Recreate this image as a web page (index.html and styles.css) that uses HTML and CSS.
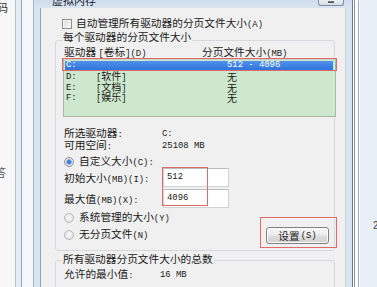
FILE: index.html
```html
<!DOCTYPE html>
<html lang="zh-CN">
<head>
<meta charset="utf-8">
<title>虚拟内存</title>
<link rel="stylesheet" href="styles.css">
</head>
<body>
<div class="screen">
  <div class="bg-left">
    <div class="bl-page">
      <span class="bl-ch bl-ch1">码</span>
      <span class="bl-ch bl-ch2">答</span>
    </div>
    <div class="bl-strip"></div>
    <div class="bl-pane"></div>
  </div>

  <div class="dialog">
    <div class="titlebar">
      <span class="title">虚拟内存</span>
      <span class="closebtn"><span class="closemark"></span></span>
    </div>
    <div class="client">
      <div class="auto">
        <span class="checkbox"></span>
        <span>自动管理所有驱动器的分页文件大小<span class="m">(A)</span></span>
      </div>

      <fieldset class="group">
        <legend>每个驱动器的分页文件大小</legend>
        <div class="listhead">
          <span class="lh-drive">驱动器 <span class="m">[</span>卷标<span class="m">](D)</span></span>
          <span class="lh-size">分页文件大小<span class="m">(MB)</span></span>
        </div>
        <div class="list">
          <div class="row sel"><span class="c-drv m">C:</span><span class="c-lbl"></span><span class="c-size m">512 - 4096</span></div>
          <div class="row"><span class="c-drv m">D:</span><span class="c-lbl"><span class="m">[</span>软件<span class="m">]</span></span><span class="c-size">无</span></div>
          <div class="row"><span class="c-drv m">E:</span><span class="c-lbl"><span class="m">[</span>文档<span class="m">]</span></span><span class="c-size">无</span></div>
          <div class="row"><span class="c-drv m">F:</span><span class="c-lbl"><span class="m">[</span>娱乐<span class="m">]</span></span><span class="c-size">无</span></div>
          <span class="mark mark-row"></span>
        </div>

        <div class="info">
          <div class="kv"><span class="k">所选驱动器<span class="m">:</span></span><span class="v m">C:</span></div>
          <div class="kv"><span class="k">可用空间<span class="m">:</span></span><span class="v m">25108 MB</span></div>
        </div>

        <div class="radio-row first"><span class="radio on"></span><span>自定义大小<span class="m">(C):</span></span></div>

        <div class="fields">
          <div class="field"><span class="fk">初始大小<span class="m">(MB)(I):</span></span><span class="input m">512</span></div>
          <div class="field"><span class="fk">最大值<span class="m">(MB)(X):</span></span><span class="input m">4096</span></div>
          <span class="mark mark-inputs"></span>
        </div>

        <div class="bottom">
          <div class="radios">
            <div class="radio-row"><span class="radio"></span><span>系统管理的大小<span class="m">(Y)</span></span></div>
            <div class="radio-row"><span class="radio"></span><span>无分页文件<span class="m">(N)</span></span></div>
          </div>
          <div class="btnwrap">
            <span class="btn">设置<span class="m">(S)</span></span>
            <span class="mark mark-btn"></span>
          </div>
        </div>
      </fieldset>

      <fieldset class="group group2">
        <legend>所有驱动器分页文件大小的总数</legend>
        <div class="kv total"><span class="k2">允许的最小值<span class="m">:</span></span><span class="v m">16 MB</span></div>
      </fieldset>
    </div>
  </div>

  <div class="bg-right">
    <div class="br-a"></div>
    <div class="br-b"></div>
    <div class="br-c"><span class="br-ch">2</span></div>
  </div>
</div>
</body>
</html>
```

FILE: styles.css
```css
* { box-sizing: border-box; }
html, body { margin: 0; padding: 0; }
body {
  width: 377px;
  height: 287px;
  overflow: hidden;
  background: #f0f0f0;
  font-family: "Noto Sans CJK SC", "Noto Sans", sans-serif;
  font-size: 10.7px;
  line-height: 12px;
  color: #1a1a1a;
}
.m { font-family: "Liberation Mono", monospace; font-size: 8.9px; }

.screen { display: flex; width: 377px; height: 287px; }

/* background window on the left */
.bg-left { display: flex; flex: none; width: 33px; height: 287px; }
.bl-page {
  width: 16px;
  background: #f7f7f7;
  border-right: 1px solid #b5c4d4;
  display: flex;
  flex-direction: column;
  overflow: hidden;
}
.bl-ch { font-size: 11px; line-height: 12px; color: #333; display: block; }
.bl-ch1 { margin: 1px 0 0 -3px; }
.bl-ch2 { margin: 153px 0 0 -5px; color: #555; }
.bl-strip {
  width: 6px;
  background: #e5ecf4;
  border-right: 1px solid #9ca5b0;
}
.bl-pane { width: 11px; background: #f3f6fa; }

/* dialog */
.dialog {
  flex: none;
  width: 320px;
  height: 287px;
  display: flex;
  flex-direction: column;
  background: #d9e4f1;
  border-left: 1px solid #a3b6cb;
  border-right: 1px solid #6f7c8a;
}
.titlebar {
  height: 8px;
  flex: none;
  display: flex;
  align-items: flex-start;
  overflow: hidden;
  padding-left: 18px;
  background: linear-gradient(#cfdcec, #dbe5f1);
}
.title { font-size: 11px; line-height: 12px; margin-top: -6px; color: #1a2633; }
.closebtn {
  margin-left: auto;
  margin-right: 8px;
  width: 26px;
  height: 6px;
  border: 1px solid #7f8ea2;
  border-top: none;
  border-radius: 0 0 3px 3px;
  background: linear-gradient(#e9eef4, #d4dde8);
  display: flex;
  justify-content: center;
}
.closemark { width: 6px; height: 2px; border-bottom: 1px solid #555; border-top: 1px solid #777; margin-top: 1px; }

.client {
  flex: 1;
  margin: 0 6px 0 6px;
  background: #f0f0f0;
  border-left: 1px solid #94a3b4;
  border-right: 1px solid #c6d3e1;
  display: flex;
  flex-direction: column;
}

.auto {
  display: flex;
  align-items: center;
  height: 12px;
  margin: 10px 0 0 21px;
  gap: 4px;
}
.checkbox {
  width: 10px;
  height: 10px;
  border: 1px solid #8e8f8f;
  background: linear-gradient(135deg, #dcdcdc, #f8f8f8);
  box-shadow: inset 0 0 0 1px #f4f4f4;
}

.group {
  margin: 1px 10px 0 14px;
  padding: 0 1px 6px 8px;
  border: 1px solid #d6dadf;
  border-radius: 3px;
  min-width: 0;
}
.group legend {
  padding: 0 1px 6px;
  margin-left: -2px;
  line-height: 12px;
}
.listhead { display: flex; height: 12px; margin-top: -3px; }
.lh-drive { width: 138px; }

.list {
  position: relative;
  height: 58px;
  margin: 1px -3px 0 -1px;
  background: #cde8cc;
  border: 1px solid #a9b6a9;
  border-top-color: #c3cfc3;
}
.row {
  display: flex;
  align-items: center;
  height: 10.5px;
  line-height: 10.5px;
  padding-left: 2px;
}
.row.sel {
  height: 9px;
  line-height: 9px;
  margin: 1px 2px 2px 1px;
  padding-left: 1px;
  background: linear-gradient(#4f91ea, #2f74dc);
  color: #fff;
}
.c-drv { width: 30px; }
.c-lbl { width: 131px; font-size: 10px; }
.c-size { font-size: 10px; }
.row .c-size.m { font-size: 8.9px; }

.mark { position: absolute; border: 1px solid #df6a6a; pointer-events: none; }
.mark-row { left: -2px; top: -2px; width: 275px; height: 13px; }

.info { margin-top: 11px; }
.kv { display: flex; height: 12px; align-items: center; }
.k { width: 98px; }
.k2 { width: 96px; }

.radio-row { display: flex; align-items: center; height: 12px; gap: 5px; }
.radio-row.first { margin-top: 4px; }
.radio {
  width: 10px;
  height: 10px;
  border-radius: 50%;
  border: 1px solid #b9b9b9;
  background: radial-gradient(circle at 50% 45%, #fbfbfb 0, #e4e4e4 70%);
}
.radio.on {
  border-color: #8d8d8d;
  background: radial-gradient(circle, #2e64c9 0, #5a8ee0 2px, #c8d6ea 3px, #f3f3f3 4px);
}

.fields { position: relative; display: flex; flex-direction: column; gap: 1px; }
.field { display: flex; height: 20px; align-items: flex-start; }
.fk { width: 99px; line-height: 20px; }
.input {
  width: 66px;
  height: 19px;
  background: #fff;
  border: 1px solid #cfd3d8;
  border-top-color: #b8bdc3;
  padding-left: 3px;
  line-height: 17px;
  color: #222;
}
.mark-inputs { left: 98px; top: -1px; width: 46px; height: 39px; }

.bottom { display: flex; align-items: flex-start; }
.radios { flex: 1; margin-top: 3px; display: flex; flex-direction: column; gap: 5px; }
.btnwrap { position: relative; margin: 18px 4px 0 0; }
.btn {
  display: flex;
  align-items: center;
  justify-content: center;
  width: 63px;
  height: 17px;
  border: 1px solid #7f8081;
  border-radius: 3px;
  background: linear-gradient(#f7f7f7 0, #ececec 45%, #dddddd 55%, #d0d0d0 100%);
  box-shadow: inset 0 0 0 1px #fbfbfb;
  gap: 1px;
}
.mark-btn { left: -6px; top: -10px; width: 77px; height: 31px; }

.group2 { margin-top: 2px; padding-bottom: 20px; border-bottom: none; border-radius: 3px 3px 0 0; }
.group2 legend { padding-bottom: 2px; }
.total { margin-top: 2px; }

/* background window on the right */
.bg-right { flex: none; width: 24px; height: 287px; display: flex; }
.br-a { width: 2px; background: #fcfcfc; border-right: 1px solid #8b95a0; }
.br-b { width: 4px; background: #fbfcfd; border-right: 1px solid #a2abb5; border-top: 1px solid transparent; }
.br-c {
  flex: 1;
  background: #e9eff6;
  border-left: 1px solid #f8fafc;
  overflow: hidden;
  display: flex;
  flex-direction: column;
}
.br-ch { font-family: "Liberation Sans", sans-serif; font-size: 10px; line-height: 10px; margin: 221px 0 0 13px; color: #444; }
```
